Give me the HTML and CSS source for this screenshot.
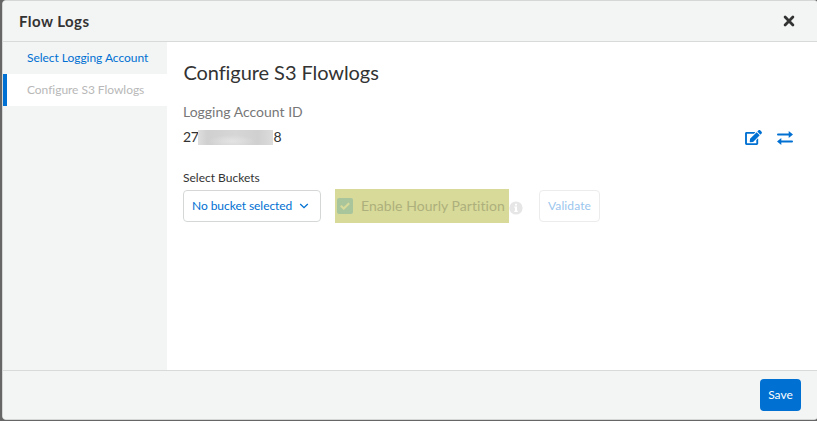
FILE: index.html
```html
<!DOCTYPE html>
<html lang="en">
<head>
<meta charset="utf-8">
<title>Flow Logs</title>
<link rel="stylesheet" href="styles.css">
</head>
<body>
<section class="modal">
  <header class="modal-header">
    <h1>Flow Logs</h1>
    <button class="icon-button close" aria-label="Close"><svg width="12" height="12" viewBox="0 0 12 12"><path d="M2.1 2.1L9.9 9.9M9.9 2.1L2.1 9.9" stroke="#333" stroke-width="2.8" stroke-linecap="round"/></svg></button>
  </header>
  <div class="modal-body">
    <nav class="steps">
      <a class="step">Select Logging Account</a>
      <a class="step current">Configure S3 Flowlogs</a>
    </nav>
    <main class="content">
      <h2>Configure S3 Flowlogs</h2>
      <div class="field-label">Logging Account ID</div>
      <div class="account">
        <div class="account-id"><span>27</span><i class="redacted"></i><span>8</span></div>
        <div class="actions">
          <button class="icon-button" aria-label="Edit"><svg width="17" height="15" viewBox="0 0 576 512"><path fill="#0070d2" d="M402.600 83.200l90.200 90.200c3.800 3.800 3.800 10 0 13.800L274.400 405.600l-92.800 10.300c-12.400 1.400-22.900-9.100-21.500-21.500l10.300-92.800L388.800 83.200c3.800-3.800 10-3.800 13.800 0zm162-22.900l-48.800-48.800c-15.200-15.200-39.900-15.200-55.200 0l-35.400 35.400c-3.800 3.800-3.800 10 0 13.800l90.200 90.200c3.800 3.800 10 3.800 13.800 0l35.400-35.400c15.200-15.300 15.200-40 0-55.200zM384 346.200V448H64V128h229.800c3.200 0 6.200-1.300 8.500-3.500l40-40c7.600-7.600 2.200-20.500-8.500-20.500H48C21.500 64 0 85.500 0 112v352c0 26.500 21.500 48 48 48h352c26.500 0 48-21.500 48-48V306.200c0-10.700-12.900-16-20.500-8.500l-40 40c-2.200 2.300-3.500 5.300-3.500 8.500z"/></svg></button>
          <button class="icon-button" aria-label="Switch account"><svg width="16" height="14" viewBox="0 0 16 14"><path d="M1 3.500H13M3 10.500H15" stroke="#0070d2" stroke-width="2" stroke-linecap="round"/><path d="M11.700 0L16 3.500L11.700 7ZM4.300 7L0 10.500L4.300 14Z" fill="#0070d2"/></svg></button>
        </div>
      </div>
      <div class="bucket-label">Select Buckets</div>
      <div class="bucket-row">
        <button class="select">No bucket selected<svg width="10" height="6" viewBox="0 0 10 6"><path d="M1.200 1L5 4.700L8.800 1" fill="none" stroke="#0070d2" stroke-width="1.300"/></svg></button>
        <div class="partition"><span class="checkbox"><svg width="10" height="8" viewBox="0 0 10 8"><path d="M.8 3.800L3.700 6.500L9.200 1.200" fill="none" stroke="#d8da99" stroke-width="2.200"/></svg></span><span>Enable Hourly Partition</span></div>
        <svg class="info" width="14" height="14" viewBox="0 0 14 14"><circle cx="7" cy="7" r="6.600" fill="#e6e6e6"/><path d="M6 2.800h2v1.800H6zM5.300 5.600H8v4.200h.8V11H5.300V9.800H6V6.800h-.7z" fill="#fff"/></svg>
        <button class="validate" disabled>Validate</button>
      </div>
    </main>
  </div>
  <footer class="modal-footer"><button class="save">Save</button></footer>
</section>
</body>
</html>
```

FILE: styles.css
```css
* { box-sizing: border-box; }
body {
  margin: 0;
  height: 421px;
  padding-left: 2px;
  overflow: hidden;
  background: #666;
  color: #333;
  font: 13px/20px Lato, "Liberation Sans", sans-serif;
}
button { font: inherit; padding: 0; margin: 0; }
h1, h2 { margin: 0; }
svg { display: block; flex: none; }
.modal {
  width: 816px;
  height: 420px;
  display: flex;
  flex-direction: column;
  border: 1px solid #d5d7d7;
  border-radius: 4px;
  background: #fff;
  overflow: hidden;
}
.modal-header {
  height: 41px;
  flex: none;
  display: flex;
  align-items: center;
  justify-content: space-between;
  padding: 0 22px 0 16px;
  background: #f3f5f5;
  border-bottom: 1px solid #d8dada;
}
.modal-header h1 { font-size: 15px; font-weight: 700; letter-spacing: .45px; }
.icon-button { border: 0; background: none; }
.modal-body { flex: 1; display: flex; min-height: 0; }
.steps { width: 164px; flex: none; background: #f3f5f5; }
.step {
  display: block;
  height: 32px;
  line-height: 32px;
  padding-left: 24px;
  font-size: 12px;
  letter-spacing: -.04px;
  font-variant-ligatures: common-ligatures;
  color: #0070d2;
  white-space: nowrap;
}
.step.current {
  padding-left: 20px;
  border-left: 4px solid #0070d2;
  background: #fff;
  color: #b8b8b8;
}
.content { flex: 1; padding: 17px 24px 0 16px; }
.content h2 { font-size: 20px; font-weight: 400; line-height: 26px; padding-left: .4px; letter-spacing: -.07px; }
.field-label { margin-top: 17px; font-size: 14px; color: #777; }
.account {
  display: flex;
  justify-content: space-between;
  align-items: center;
  height: 20px;
  margin-top: 5px;
  font-size: 14px;
}
.account-id { display: flex; align-items: center; letter-spacing: -.4px; }
.redacted {
  width: 75px;
  height: 15px;
  background: radial-gradient(ellipse at 45% 75%, #e3e3e3, transparent 40%), linear-gradient(90deg, #dedede, #d0d0d0 12%, #d6d6d6 50%, #d0d0d0 80%, #dcdcdc);
}
.actions { display: flex; gap: 15px; align-items: center; padding-top: 1px; }
.bucket-label { margin-top: 21px; font-size: 12px; }
.bucket-row { display: flex; align-items: center; margin-top: 1px; height: 34px; }
.select {
  width: 138px;
  height: 32px;
  display: flex;
  align-items: center;
  justify-content: space-between;
  padding: 0 11px 0 8px;
  border: 1px solid #d5d7d7;
  border-radius: 4px;
  background: #fff;
  color: #0070d2;
  font-size: 12px;
  letter-spacing: -.05px;
}
.partition {
  width: 174px;
  height: 34px;
  margin-left: 14px;
  padding-left: 2px;
  display: flex;
  align-items: center;
  gap: 8px;
  background: #d8da99;
  color: #adb07c;
  font-size: 14px;
  letter-spacing: .05px;
  white-space: nowrap;
}
.checkbox {
  width: 16px;
  height: 16px;
  display: grid;
  place-items: center;
  border-radius: 2px;
  background: #a9c59c;
}
.info { margin: 4px 16px 0 0; }
.validate {
  width: 61px;
  height: 32px;
  border: 1px solid #ececec;
  border-radius: 4px;
  background: #fff;
  color: #9bc6ed;
  font-size: 12px;
  letter-spacing: .1px;
}
.modal-footer {
  height: 49px;
  flex: none;
  display: flex;
  justify-content: flex-end;
  align-items: center;
  padding-right: 16px;
  border-top: 1px solid #d8dada;
  background: #f3f5f5;
}
.save {
  width: 41px;
  height: 32px;
  border: 0;
  border-radius: 4px;
  background: #0070d2;
  color: #fff;
  font-size: 12px;
}
```
